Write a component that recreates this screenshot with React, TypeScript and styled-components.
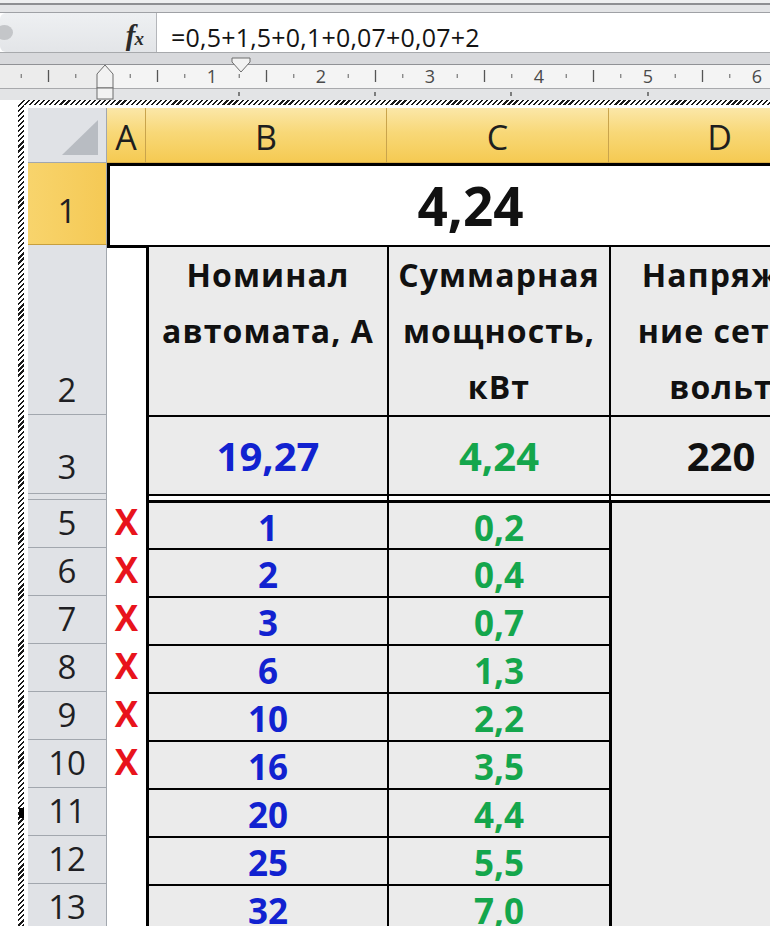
import React from 'react';
import styled, { createGlobalStyle } from 'styled-components';

const GlobalStyle = createGlobalStyle`
  *, *::before, *::after { box-sizing: border-box; }
  html, body { margin: 0; padding: 0; background: #fff; }
  body { font-family: 'Open Sans', 'Noto Sans', sans-serif; }
`;

const BLUE = '#1122d0';
const GREEN = '#14a64c';
const BLACK = '#111';
const CELL_GRAY = '#ebebeb';
const HEAD_GRAY = '#e0e2e6';
const GRID_LINE = '#a2a7ae';
const YELLOW_COL = 'linear-gradient(180deg, #fbe7a8 0%, #f8d878 45%, #f5ca52 100%)';
const YELLOW_ROW = 'linear-gradient(90deg, #f8d46c, #f5c955)';

const Page = styled.div`
  width: 770px;
  height: 926px;
  overflow: hidden;
  background: #fff;
  display: flex;
  flex-direction: column;
`;

const TopStrip = styled.div`
  height: 12px;
  flex: none;
  background: linear-gradient(#eeeff0 0 3px, #8e8f92 3px 5px, #e3e4e6 5px);
`;

const FormulaBar = styled.div`
  height: 41px;
  flex: none;
  display: flex;
  border-top: 1px solid #9fa1a5;
  border-bottom: 1px solid #a7a9ac;
`;

const NameArea = styled.div`
  width: 157px;
  flex: none;
  display: flex;
  align-items: center;
  justify-content: space-between;
  padding: 5px 13px 0 0;
  background: linear-gradient(#eef0f2, #e3e5e8);
  border-right: 1px solid #b4b6ba;
  border-radius: 6px 0 0 6px;
`;

const Knob = styled.span`
  width: 17px;
  height: 15px;
  margin-left: -4px;
  margin-top: -5px;
  border-radius: 50%;
  background: #c4c6c9;
`;

const Fx = styled.span`
  font-family: 'Liberation Serif', 'DejaVu Serif', serif;
  font-style: italic;
  font-weight: 700;
  font-size: 29px;
  line-height: 1;
  color: #2a2a2a;
  letter-spacing: -1px;

  small {
    font-size: 19px;
  }
`;

const FormulaInput = styled.div`
  flex: 1;
  display: flex;
  align-items: flex-end;
  padding: 0 0 2px 14px;
  background: #fff;
  font-size: 25px;
  line-height: 1;
  letter-spacing: 0.2px;
  color: #141414;
  white-space: nowrap;
`;

const RulerBar = styled.div`
  height: 47px;
  flex: none;

  svg {
    display: block;
  }
`;

const Frame = styled.div`
  position: relative;
  flex: 1;
  display: flex;
  margin-left: 18px;
  padding: 5px 0 0 6px;
  border-top-left-radius: 6px;
  background: repeating-linear-gradient(135deg, #1a1a1a 0 1.6px, #fff 1.6px 3.6px);
`;

const FrameMark = styled.span`
  position: absolute;
  left: 1px;
  top: 708px;
  width: 5px;
  height: 10px;
  background: #000;
`;

const FrameInner = styled.div`
  flex: 1;
  background: #fff;
  padding: 3px 0 0 4px;
`;

const Sheet = styled.div`
  display: grid;
  grid-template-columns: 79px 39px 241px 222px 222px;
  grid-template-rows: 55px 82px 170px 79px 6px repeat(9, 48px);
  width: max-content;
`;

const Corner = styled.div`
  display: flex;
  justify-content: flex-end;
  align-items: flex-end;
  padding: 0 8px 7px 0;
  background: ${HEAD_GRAY};
  border-right: 1px solid ${GRID_LINE};
  border-bottom: 1px solid ${GRID_LINE};
`;

const CornerTriangle = styled.span`
  width: 36px;
  height: 35px;
  background: #b8bcc2;
  clip-path: polygon(100% 0, 100% 100%, 0 100%);
`;

const ColHead = styled.div`
  display: flex;
  align-items: center;
  justify-content: center;
  padding-top: 4px;
  background: ${YELLOW_COL};
  border-right: 1px solid #c9a44c;
  border-bottom: 1px solid #d9ad45;
  font-size: 34px;
  line-height: 1;
  color: #1e1e1e;
  overflow: hidden;
`;

const RowHead = styled.div<{ $sel?: boolean; $pad?: number }>`
  display: flex;
  align-items: flex-end;
  justify-content: center;
  padding-bottom: ${(p) => p.$pad ?? 8}px;
  background: ${(p) => (p.$sel ? YELLOW_ROW : HEAD_GRAY)};
  border-right: 1px solid ${GRID_LINE};
  border-bottom: 1px solid ${(p) => (p.$sel ? '#c79f3e' : GRID_LINE)};
  font-size: 33px;
  line-height: 1;
  color: #1f1f24;
  overflow: hidden;
`;

const TitleCell = styled.div`
  grid-column: 2 / span 4;
  display: flex;
  align-items: center;
  justify-content: center;
  background: #fff;
  border-top: 3px solid #000;
  border-left: 3px solid #000;
  font-size: 53px;
  font-weight: 700;
  line-height: 1;
  color: ${BLACK};
`;

const MarginCell = styled.div<{ $top?: number }>`
  display: flex;
  align-items: center;
  justify-content: center;
  padding-bottom: 5px;
  background: #fff;
  border-top: ${(p) => p.$top ?? 0}px solid #000;
`;

const Cross = styled.span`
  font-size: 35px;
  font-weight: 700;
  line-height: 1;
  color: #e8141c;
`;

const HeaderCell = styled.div<{ $left: number }>`
  background: ${CELL_GRAY};
  border-top: 2px solid #000;
  border-left: ${(p) => p.$left}px solid #000;
  font-size: 32px;
  font-weight: 700;
  line-height: 56px;
  letter-spacing: 1.1px;
  text-align: center;
  white-space: nowrap;
  color: ${BLACK};
  overflow: hidden;
`;

const TotalCell = styled.div<{ $left: number; $color: string }>`
  display: flex;
  align-items: center;
  justify-content: center;
  background: ${CELL_GRAY};
  border-top: 2px solid #000;
  border-left: ${(p) => p.$left}px solid #000;
  font-size: 40px;
  font-weight: 700;
  line-height: 1;
  color: ${(p) => p.$color};
`;

const GapCell = styled.div<{ $left: number }>`
  background: #fff;
  border-top: 2px solid #000;
  border-left: ${(p) => p.$left}px solid #000;
`;

const DataCell = styled.div<{ $left: number; $top: number; $color: string }>`
  display: flex;
  align-items: center;
  justify-content: center;
  padding-top: 3px;
  background: ${CELL_GRAY};
  border-top: ${(p) => p.$top}px solid #000;
  border-left: ${(p) => p.$left}px solid #000;
  font-size: 35px;
  font-weight: 700;
  line-height: 1;
  color: ${(p) => p.$color};
`;

const EmptyBlock = styled.div`
  grid-column: 5;
  grid-row: 6 / span 9;
  background: ${CELL_GRAY};
  border-top: 3px solid #000;
  border-left: 3px solid #000;
`;

const rows: [number, string, string, boolean][] = [
  [5, '1', '0,2', true],
  [6, '2', '0,4', true],
  [7, '3', '0,7', true],
  [8, '6', '1,3', true],
  [9, '10', '2,2', true],
  [10, '16', '3,5', true],
  [11, '20', '4,4', false],
  [12, '25', '5,5', false],
  [13, '32', '7,0', false],
];

const UNIT = 109;
const ORIGIN = 103;

const Ruler: React.FC = () => {
  const marks: React.ReactNode[] = [];
  for (let q = -3; q <= 27; q++) {
    const x = ORIGIN + (q * UNIT) / 4;
    if (x > 770) break;
    const r = ((q % 4) + 4) % 4;
    if (r === 0) {
      if (q > 0) {
        marks.push(
          <text key={q} x={x} y={30} fontSize={18} fontFamily="Open Sans, sans-serif" fill="#4a4a4a" textAnchor="middle">
            {q / 4}
          </text>
        );
      }
    } else if (r === 2) {
      marks.push(<line key={q} x1={x} y1={17} x2={x} y2={29} stroke="#555" strokeWidth={1.3} />);
    } else {
      marks.push(<line key={q} x1={x} y1={21} x2={x} y2={25} stroke="#777" strokeWidth={1.2} />);
    }
  }
  const tabs = [239, 375, 511, 648];
  return (
    <RulerBar>
      <svg width="770" height="47" viewBox="0 0 770 47">
        <rect x="0" y="0" width="770" height="11" fill="#d8d9dc" />
        <rect x="0" y="11" width="770" height="25" fill="#f4f4f4" />
        <rect x="0" y="11" width="103" height="25" fill="#ececec" />
        <line x1="0" y1="11.5" x2="770" y2="11.5" stroke="#909195" />
        <line x1="0" y1="35.5" x2="770" y2="35.5" stroke="#a8a9ac" />
        <rect x="0" y="36" width="770" height="11" fill="#e3e4e6" />
        {marks}
        {tabs.map((x) => (
          <line key={x} x1={x} y1={39} x2={x} y2={43} stroke="#444" strokeWidth={1.3} />
        ))}
        <path d="M232 5 H250 V9 L241 19 L232 9 Z" fill="#f2f2f2" stroke="#6d6d6d" />
        <path d="M105 12 L113 21 V35 H97 V21 Z" fill="#f2f2f2" stroke="#6d6d6d" />
        <rect x="97" y="35" width="16" height="11" fill="#f2f2f2" stroke="#6d6d6d" />
      </svg>
    </RulerBar>
  );
};

const App: React.FC = () => {
  return (
    <Page>
      <GlobalStyle />
      <TopStrip />
      <FormulaBar>
        <NameArea>
          <Knob />
          <Fx>
            f<small>x</small>
          </Fx>
        </NameArea>
        <FormulaInput>=0,5+1,5+0,1+0,07+0,07+2</FormulaInput>
      </FormulaBar>
      <Ruler />
      <Frame>
        <FrameMark />
        <FrameInner>
          <Sheet>
            <Corner>
              <CornerTriangle />
            </Corner>
            <ColHead>A</ColHead>
            <ColHead>B</ColHead>
            <ColHead>C</ColHead>
            <ColHead>D</ColHead>

            <RowHead $sel $pad={17}>1</RowHead>
            <TitleCell>4,24</TitleCell>

            <RowHead>2</RowHead>
            <MarginCell $top={3} />
            <HeaderCell $left={3}>
              Номинал
              <br />
              автомата, А
            </HeaderCell>
            <HeaderCell $left={2}>
              Суммарная
              <br />
              мощность,
              <br />
              кВт
            </HeaderCell>
            <HeaderCell $left={2}>
              Напряже
              <br />
              ние сети,
              <br />
              вольт
            </HeaderCell>

            <RowHead $pad={10}>3</RowHead>
            <MarginCell />
            <TotalCell $left={3} $color={BLUE}>19,27</TotalCell>
            <TotalCell $left={2} $color={GREEN}>4,24</TotalCell>
            <TotalCell $left={2} $color={BLACK}>220</TotalCell>

            <RowHead $pad={0} />
            <MarginCell />
            <GapCell $left={3} />
            <GapCell $left={2} />
            <GapCell $left={2} />

            {rows.map(([n, amp, kw, crossed], i) => (
              <React.Fragment key={n}>
                <RowHead>{n}</RowHead>
                <MarginCell>{crossed && <Cross>X</Cross>}</MarginCell>
                <DataCell $left={3} $top={i === 0 ? 3 : 2} $color={BLUE}>
                  {amp}
                </DataCell>
                <DataCell $left={2} $top={i === 0 ? 3 : 2} $color={GREEN}>
                  {kw}
                </DataCell>
              </React.Fragment>
            ))}
            <EmptyBlock />
          </Sheet>
        </FrameInner>
      </Frame>
    </Page>
  );
};

export default App;
